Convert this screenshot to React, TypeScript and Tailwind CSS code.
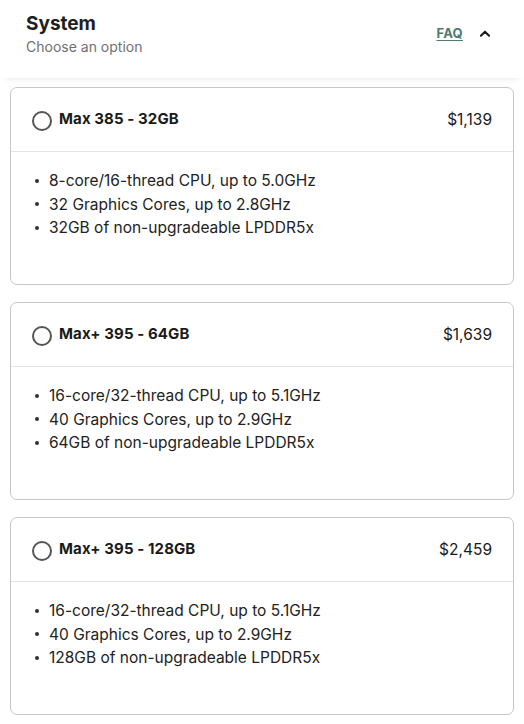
import React from 'react';

type Option = {
  name: string;
  price: string;
  specs: string[];
};

const OPTIONS: Option[] = [
  {
    name: 'Max 385 - 32GB',
    price: '$1,139',
    specs: ['8-core/16-thread CPU, up to 5.0GHz', '32 Graphics Cores, up to 2.8GHz', '32GB of non-upgradeable LPDDR5x'],
  },
  {
    name: 'Max+ 395 - 64GB',
    price: '$1,639',
    specs: ['16-core/32-thread CPU, up to 5.1GHz', '40 Graphics Cores, up to 2.9GHz', '64GB of non-upgradeable LPDDR5x'],
  },
  {
    name: 'Max+ 395 - 128GB',
    price: '$2,459',
    specs: ['16-core/32-thread CPU, up to 5.1GHz', '40 Graphics Cores, up to 2.9GHz', '128GB of non-upgradeable LPDDR5x'],
  },
];

const OptionCard: React.FC<{ option: Option }> = ({ option }) => (
  <div className="h-[198px] flex flex-col rounded-[7px] border border-[#c6c6c6] bg-white">
    {/* Card header */}
    <div className="h-[64px] flex items-center justify-between pl-[21px] pr-[21px] border-b border-[#e3e3e3]">
      <div className="flex items-center gap-[7px]">
        <span className="w-[20px] h-[20px] rounded-full border-2 border-[#555555] mt-[3px]" />
        <span className="text-[15px] font-bold text-[#1a1a1a] tracking-[0.1px]">{option.name}</span>
      </div>
      <span className="text-[15.5px] text-[#1a1a1a]">{option.price}</span>
    </div>

    {/* Specs */}
    <ul className="pt-[17px] pl-[24px] flex flex-col">
      {option.specs.map((spec) => (
        <li key={spec} className="flex items-center h-[23.5px] text-[15.5px] text-[#222222]">
          <span className="w-[4px] h-[4px] rounded-full bg-[#333333] mr-[10px]" />
          {spec}
        </li>
      ))}
    </ul>
  </div>
);

export default function App() {
  return (
    <div className="w-[524px] min-h-[724px] bg-white font-['Inter',sans-serif]">
      {/* Section header */}
      <div className="h-[78px] flex justify-between pl-[26px] pr-[32px] pt-[12px] shadow-[0_5px_6px_-5px_rgba(0,0,0,0.12)]">
        <div className="flex flex-col">
          <span className="text-[19px] font-bold text-[#1e1e1e] leading-[24px]">System</span>
          <span className="text-[14px] text-[#707070] leading-[20px] mt-[1px]">Choose an option</span>
        </div>
        <div className="flex items-center gap-[15px] h-[24px] mt-[10px]">
          <a className="text-[13px] font-bold text-[#4e7a72] underline underline-offset-2 tracking-[0.3px]">FAQ</a>
          <svg width="14" height="14" viewBox="0 0 24 24" fill="none" stroke="#1a1a1a" strokeWidth="3.5" strokeLinecap="round" strokeLinejoin="round">
            <path d="M5 15l7-7 7 7" />
          </svg>
        </div>
      </div>

      <div className="flex flex-col gap-[17px] px-[10px] pt-[9px] pb-[10px]">
        {OPTIONS.map((o) => (
          <OptionCard key={o.name} option={o} />
        ))}
      </div>
    </div>
  );
}
